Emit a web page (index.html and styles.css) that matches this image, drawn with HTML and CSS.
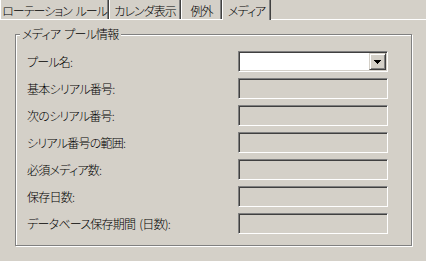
FILE: index.html
```html
<!DOCTYPE html>
<html lang="ja">
<head>
    <meta charset="UTF-8">
    <title>メディア</title>
    <link rel="stylesheet" href="styles.css">
</head>
<body>

    <!-- Tab strip -->
    <div class="tabs">
        <div class="tab tab-rotation">ローテーション ルール</div>
        <div class="tab tab-calendar">カレンダ表示</div>
        <div class="tab tab-exception">例外</div>
        <div class="tab tab-media active">メディア</div>
    </div>

    <div class="panel">
        <fieldset class="group">
            <legend>メディア プール情報</legend>
            <div class="rows">
                <div class="row">
                    <label>プール名:</label>
                    <div class="combo">
                        <span class="combo-btn">
                            <svg width="7" height="4" viewBox="0 0 7 4" shape-rendering="crispEdges">
                                <rect x="0" y="0" width="7" height="1" fill="#000"/>
                                <rect x="1" y="1" width="5" height="1" fill="#000"/>
                                <rect x="2" y="2" width="3" height="1" fill="#000"/>
                                <rect x="3" y="3" width="1" height="1" fill="#000"/>
                            </svg>
                        </span>
                    </div>
                </div>
                <div class="row">
                    <label>基本シリアル番号:</label>
                    <input class="field" type="text" disabled>
                </div>
                <div class="row">
                    <label>次のシリアル番号:</label>
                    <input class="field" type="text" disabled>
                </div>
                <div class="row">
                    <label>シリアル番号の範囲:</label>
                    <input class="field" type="text" disabled>
                </div>
                <div class="row">
                    <label>必須メディア数:</label>
                    <input class="field" type="text" disabled>
                </div>
                <div class="row">
                    <label>保存日数:</label>
                    <input class="field" type="text" disabled>
                </div>
                <div class="row">
                    <label>データベース保存期間 (日数):</label>
                    <input class="field" type="text" disabled>
                </div>
            </div>
        </fieldset>
    </div>

</body>
</html>
```

FILE: styles.css
```css
body {
    margin: 0;
    padding: 0;
    background: #d4d0c8;
    font-family: "Noto Sans CJK JP", sans-serif;
    font-size: 12px;
    font-weight: 300;
    font-feature-settings: "palt";
    letter-spacing: -0.75px;
    word-spacing: 2px;
    color: #000;
    width: 426px;
    height: 261px;
    overflow: hidden;
}
.tabs {
    display: flex;
    align-items: flex-start;
    height: 19px;
    border-bottom: 1px solid #fff;
}
.tab {
    box-sizing: border-box;
    height: 19px;
    padding-top: 3px;
    line-height: 15px;
    text-align: center;
    white-space: nowrap;
    letter-spacing: -1px;
    border-left: 1px solid #fff;
    border-right: 1px solid #404040;
    box-shadow: inset -1px 0 0 #808080;
}
.tab-rotation {
    width: 109px;
}
.tab-calendar {
    width: 72px;
}
.tab-exception {
    width: 41px;
}
.tab-media {
    width: 49px;
}
.tab.active {
    height: 20px;
    margin-bottom: -1px;
    background: #d4d0c8;
}
.panel {
    padding-top: 7px;
}
.group {
    box-sizing: border-box;
    width: 397px;
    margin: 0 0 0 15px;
    padding: 0;
    min-width: 0;
    border: 1px solid #808080;
    box-shadow: inset 1px 1px 0 #fff, 1px 1px 0 #fff;
}
.group legend {
    margin-left: 4px;
    padding: 0 2px;
    line-height: 14px;
    background: #d4d0c8;
}
.rows {
    display: flex;
    flex-direction: column;
    gap: 6px;
    padding: 10px 0 11px 11px;
}
.row {
    display: flex;
    align-items: center;
    height: 21px;
}
.row label {
    width: 211px;
    white-space: nowrap;
}
.field,
.combo {
    box-sizing: border-box;
    width: 150px;
    height: 21px;
    margin: 0;
    padding: 0;
    border-style: solid;
    border-width: 1px;
    border-color: #808080 #fff #fff #808080;
    box-shadow: inset 1px 1px 0 #404040, inset -1px -1px 0 #d4d0c8;
    background: #d4d0c8;
    outline: none;
    -webkit-appearance: none;
    appearance: none;
}
.combo {
    display: flex;
    justify-content: flex-end;
    padding: 1px;
    background: #fff;
}
.combo-btn {
    box-sizing: border-box;
    width: 17px;
    height: 17px;
    display: flex;
    align-items: center;
    justify-content: center;
    border-style: solid;
    border-width: 1px;
    border-color: #d4d0c8 #404040 #404040 #d4d0c8;
    box-shadow: inset 1px 1px 0 #fff, inset -1px -1px 0 #808080;
    background: #d4d0c8;
}
.combo-btn svg {
    display: block;
}
```
